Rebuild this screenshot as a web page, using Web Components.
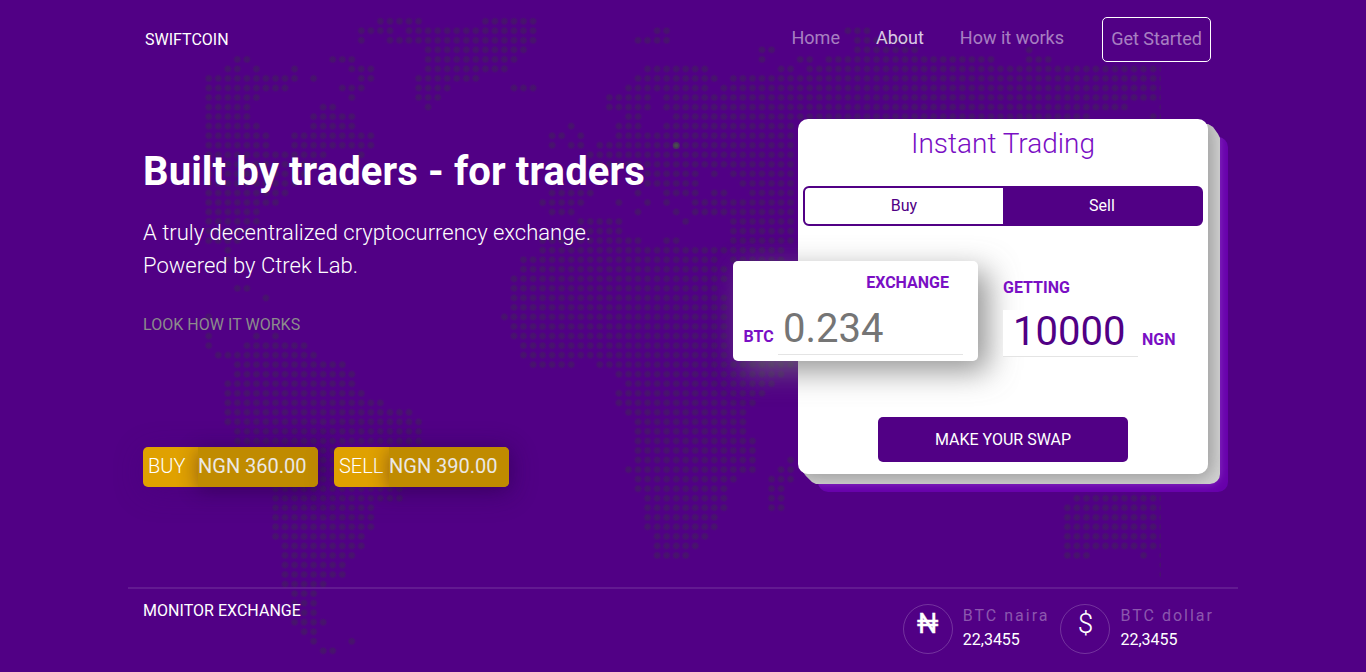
<!DOCTYPE html>
<html lang="en">
<head>
<meta charset="utf-8">
<title>Swiftcoin</title>
<style>
html,body{margin:0;height:100%}
body{background:#510085;color:#fff;font:400 16px/24px Roboto,sans-serif;overflow:hidden}
</style>
</head>
<body>
<swift-app></swift-app>
<script>
function define(name, html, setup) {
  const t = document.createElement('template');
  t.innerHTML = html;
  customElements.define(name, class extends HTMLElement {
    constructor() {
      super();
      this.attachShadow({mode: 'open'}).append(t.content.cloneNode(true));
    }
    connectedCallback() { if (setup) setup(this.shadowRoot, this); }
  });
}

/* Dotted world map: each row lists the filled column runs. */
const MAP = `18-22 29-34
16-19 21-34 47-48 67-69
16 19-34 45-48 68-73
23-33 58-59 68-74 86
3-4 13-15 23-32 58 62-63 65-82 86-88
2-3 5 9 15-17 23-31 46-52 60-61 63-100
0-9 11 16-17 22-28 45-53 55-100
0-8 14-16 22-25 32-34 44-52 54-100
0-5 15 22-24 42-46 48-100
0-4 12-13 23 42-46 48-96 100
0-4 11-15 44-45 49-92 99-100
0-5 11-15 38 43-45 48-61
0-6 9-17 36-37 39 43-61
0-6 9-17 36 38-39 41-61
0-12 16 40-61
0-11 41-61
0-10 46-51 53 55-61
0-9 46-51 56-61
0-8 36-40 45 48-51 53-54 57-61
0-7 35-39 43 46 48 51-61
0-5 36-38 45 49 51-61
0-5 39-43 50 55-61
0-4 39-43 55-61
0-3 35-45 48-49 55-61
2 35-60 62
2 33-53 55-60
33-54
32-54
3-4 32-53
6 32-54
32-54
0 31-54
32-54
0 5 7 32-54
0 4-10 33-54
1-11 33-54
3-14 34-38 41-61
3-15 43-60
2-15 44-59
2-16 43-58
2-18 43-57
2-21 44-56
2-22 45-56
3-22 45-56
3-22 45-57
3-22 45-57
5-21 45-57 61
5-21 44-57 60-61
6-20 45-55 59-61
7-20 45-54 59-60 92-99
7-20 46-54 59-60 91-100
7-17 46-54 59-60 90-100
7-17 46-53 90-100
7-17 46-53 90-100
7-16 47-52 90-100
8-16 47-51 90-100
8-15 47-50 90-92 98 100
8-14 100
8-14 100
8-12
9-11
9-11
9-11
9-12
10-11
11 15
12-13`.split('\n');

define('dot-map', `
<style>
:host{display:block;pointer-events:none}
svg{display:block;width:961px;height:672px}
</style>
<svg viewBox="200 0 961 672" aria-hidden="true">
<defs><radialGradient id="g"><stop offset="0" stop-color="#451768" stop-opacity=".95"/><stop offset=".55" stop-color="#451768" stop-opacity=".75"/><stop offset="1" stop-color="#451768" stop-opacity="0"/></radialGradient></defs>
<g fill="url(#g)"></g></svg>`, root => {
  let s = '';
  MAP.forEach((row, r) => row.split(' ').forEach(run => {
    const [a, b = a] = run.split('-').map(Number);
    for (let k = a; k <= b; k++)
      s += `<circle cx="${(208.7 + 9.54 * k).toFixed(1)}" cy="${(21.2 + 9.54 * r).toFixed(1)}" r="4.3"/>`;
  }));
  s += '<circle cx="676.2" cy="145.6" r="3.5" fill="#48534c" opacity=".55"/><circle cx="676.2" cy="145.6" r="2" fill="#48534c" opacity=".8"/>';
  root.querySelector('g').innerHTML = s;
});

define('nav-bar', `
<style>
:host{display:flex;justify-content:space-between;align-items:flex-start;padding:17px 27px 0 17px;height:102px;box-sizing:border-box}
.brand{padding-top:11px}
nav{display:flex;font-size:18px;line-height:27px;color:rgba(255,255,255,.5)}
nav span{padding-top:7px;margin-right:36px}
.on{color:rgba(255,255,255,.8)}
.cta{box-sizing:border-box;width:109px;height:45px;margin-left:2px;border:1px solid #fff;border-radius:5px;text-align:center;line-height:42px}
</style>
<div class="brand">SWIFTCOIN</div>
<nav><span>Home</span><span class="on">About</span><span>How it works</span><div class="cta">Get Started</div></nav>`);

define('price-tag', `
<style>
:host{display:flex;width:175px;height:40px;box-sizing:border-box;border-radius:5px;background:#e0a100;font-size:20px;line-height:38px;box-shadow:0 5px 30px rgba(60,0,110,.25)}
.side{width:55px;padding-left:5px;font-weight:300;box-sizing:border-box;white-space:nowrap}
.val{flex:1;background:#c08b00;color:#ebe8e4;border-radius:0 5px 5px 0;box-shadow:0 3px 20px rgba(30,0,50,.42)}
</style>
<div class="side"><slot name="side"></slot></div><div class="val"><slot></slot></div>`);

define('hero-copy', `
<style>
:host{display:block;padding:46px 0 0 15px}
h1{margin:0;font-size:40px;line-height:48px;font-weight:700;white-space:nowrap;letter-spacing:.11px}
p{margin:20px 0 0;font-size:22px;line-height:33px;font-weight:300;letter-spacing:.01px}
.link{margin-top:31px;color:#8c8c8c;letter-spacing:.03px}
.prices{display:flex;gap:16px;margin-top:110px}
</style>
<h1>Built by traders - for traders</h1>
<p>A truly decentralized cryptocurrency exchange.<br>Powered by Ctrek Lab.</p>
<div class="link">LOOK HOW IT WORKS</div>
<div class="prices">
<price-tag><span slot="side">BUY</span>NGN 360.00</price-tag>
<price-tag><span slot="side">SELL</span>NGN 390.00</price-tag>
</div>`);

define('buy-sell', `
<style>
:host{display:flex;box-sizing:border-box;height:40px;border:2px solid #510085;border-radius:6px;background:#510085;overflow:hidden;text-align:center;line-height:35px}
div{flex:1}
.on{background:#fff;color:#510085;border-radius:3px 0 0 3px}
</style><div class="on">Buy</div><div>Sell</div>`);

define('exchange-box', `
<style>
:host{display:block;box-sizing:border-box;width:245px;height:100px;border-radius:5px;background:#fff;padding:10px 15px 0 10px;color:#7a0fc4;font-weight:700;box-shadow:10px 10px 30px rgba(112,112,112,.75)}
.t{text-align:right;padding-right:14px}
.row{display:flex}
.u{width:35px;padding-top:30px;text-indent:.5px}
.n{flex:1;height:59px;border-bottom:1px solid #e4e4e4;color:#757575;font-size:40px;font-weight:400;line-height:68px;padding-left:5px}
</style>
<div class="t">EXCHANGE</div><div class="row"><div class="u">BTC</div><div class="n">0.234</div></div>`);

define('getting-box', `
<style>
:host{display:block;color:#7a0fc4;font-weight:700}
.row{display:flex;margin-top:10px}
.n{box-sizing:border-box;width:135px;height:47px;border-bottom:1px solid #e4e4e4;background:#fff;color:#510085;font-size:40px;font-weight:400;line-height:44px;padding-left:10px}
.u{padding:18px 0 0 4px}
</style>
<div>GETTING</div><div class="row"><div class="n">10000</div><div class="u">NGN</div></div>`);

define('trade-card', `
<style>
:host{display:block;position:relative;width:410px;height:355px;margin:17px 30px 0 0}
.purple,.grey{position:absolute;overflow:hidden}
.purple{inset:18px -20px -18px 20px;border-radius:10px;background:#6700ab}
.purple i{position:absolute;inset:-8px 8px 8px -8px;border-radius:12px;box-shadow:0 0 8px rgba(150,70,200,.75)}
.grey{inset:5px -12px -10px 5px;border-radius:0 0 10px 0;background:#d4d4d4;clip-path:polygon(0 0,405px 0,410px 3px,415px 10px,417px 14px,417px 360px,13px 360px,9px 358px,3px 352px,0 348px)}
.grey i{position:absolute;inset:-5px 12px 10px -5px;border-radius:10px;box-shadow:2px 2px 18px 2px rgba(130,130,130,.7)}
.panel{position:relative;box-sizing:border-box;height:355px;border-radius:10px;background:#fff;padding:5px}
h2{margin:0;font-size:28px;line-height:39px;font-weight:300;color:#7a0fc4;text-align:center}
buy-sell{margin-top:23px}
.swap{display:flex;margin:35px 0 0 -70px}
getting-box{margin:15px 0 0 25px}
.btn{width:250px;height:45px;margin:56px auto 0;border-radius:5px;background:#510085;text-align:center;line-height:45px}
</style>
<div class="purple"><i></i></div><div class="grey"><i></i></div>
<div class="panel"><h2>Instant Trading</h2><buy-sell></buy-sell>
<div class="swap"><exchange-box></exchange-box><getting-box></getting-box></div>
<div class="btn">MAKE YOUR SWAP</div></div>`);

define('rate-item', `
<style>
:host{display:flex}
.c{box-sizing:border-box;width:50px;height:50px;border:1px solid rgba(255,255,255,.2);border-radius:50%;margin-right:10px;text-align:center;font-size:28px;line-height:38px;font-weight:300}
.l{letter-spacing:2px;color:rgba(255,255,255,.35);white-space:nowrap}
</style>
<div class="c"><slot name="sign"></slot></div><div><div class="l"><slot name="label"></slot></div><div><slot></slot></div></div>`);

define('monitor-bar', `
<style>
:host{display:flex;justify-content:space-between;box-sizing:border-box;border-top:2px solid rgba(255,255,255,.1);margin-top:113px;padding:9px 24px 0 15px}
.title{padding-top:1px;letter-spacing:.03px}
.rates{display:flex;padding-top:6px;gap:11px}
.naira{font-weight:400;font-size:27px;-webkit-text-stroke:.3px #fff}
</style>
<div class="title">MONITOR EXCHANGE</div>
<div class="rates">
<rate-item><span slot="sign" class="naira">₦</span><span slot="label">BTC naira</span>22,3455</rate-item>
<rate-item><span slot="sign">$</span><span slot="label">BTC dollar</span>22,3455</rate-item>
</div>`);

define('swift-app', `
<style>
:host{display:block;position:relative;height:672px;overflow:hidden}
dot-map{position:absolute;left:200px;top:0}
main{position:relative;width:1110px;margin:0 auto}
.hero{display:flex;justify-content:space-between;height:372px}
</style>
<dot-map></dot-map>
<main><nav-bar></nav-bar><div class="hero"><hero-copy></hero-copy><trade-card></trade-card></div><monitor-bar></monitor-bar></main>`);
</script>
</body>
</html>
